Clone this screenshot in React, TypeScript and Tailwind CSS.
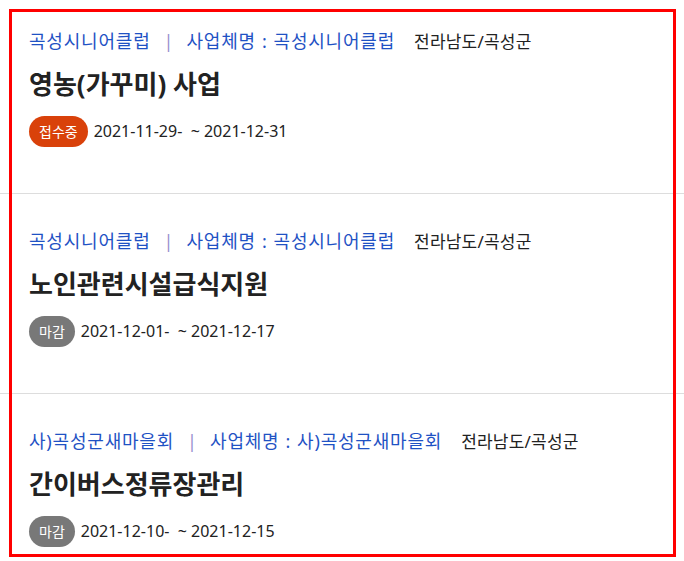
import React from 'react';

type Item = {
  org: string;
  name: string;
  region: string;
  title: string;
  status: 'open' | 'closed';
  period: string;
};

const items: Item[] = [
  {
    org: '곡성시니어클럽',
    name: '곡성시니어클럽',
    region: '전라남도/곡성군',
    title: '영농(가꾸미) 사업',
    status: 'open',
    period: '2021-11-29-  ~ 2021-12-31',
  },
  {
    org: '곡성시니어클럽',
    name: '곡성시니어클럽',
    region: '전라남도/곡성군',
    title: '노인관련시설급식지원',
    status: 'closed',
    period: '2021-12-01-  ~ 2021-12-17',
  },
  {
    org: '사)곡성군새마을회',
    name: '사)곡성군새마을회',
    region: '전라남도/곡성군',
    title: '간이버스정류장관리',
    status: 'closed',
    period: '2021-12-10-  ~ 2021-12-15',
  },
];

const ListItem: React.FC<{ item: Item }> = ({ item }) => (
  <li className="h-[200px] border-b border-[#dddddd] pl-[29px] pt-[33px]">
    <div className="flex items-baseline h-[28px] leading-[28px] whitespace-nowrap">
      <span className="text-[18px] tracking-[0.8px] text-[#1f52c4]">{item.org}</span>
      <span className="text-[18px] text-[#9a8fd0] mx-[13px]">|</span>
      <span className="text-[18px] tracking-[0.8px] text-[#1f52c4]">
        사업체명<span className="mx-[6px]">:</span>{item.name}
      </span>
      <span className="text-[17px] tracking-[0.2px] text-[#222222] ml-[19px]">{item.region}</span>
    </div>
    <h3 className="mt-[12px] h-[34px] leading-[34px] text-[26px] font-bold text-[#222222] whitespace-nowrap">
      {item.title}
    </h3>
    <div className="mt-[14px] flex items-center gap-[6px] h-[32px]">
      <span
        className={`h-[31px] px-[10px] rounded-full flex items-center text-[14px] text-white ${
          item.status === 'open' ? 'bg-[#d9410a]' : 'bg-[#787878]'
        }`}
      >
        {item.status === 'open' ? '접수중' : '마감'}
      </span>
      <span className="text-[16px] text-[#222222] whitespace-pre">{item.period}</span>
    </div>
  </li>
);

export default function App() {
  return (
    <div className="relative w-[684px] h-[561px] overflow-hidden bg-white font-['Noto_Sans','Noto_Sans_CJK_KR',sans-serif]">
      <ul className="-mt-[6px]">
        {items.map((item, i) => (
          <ListItem key={i} item={item} />
        ))}
      </ul>
      {/* highlight frame */}
      <div className="absolute left-[9px] top-[9px] w-[667px] h-[548px] border-[3px] border-[#ff0000] pointer-events-none" />
    </div>
  );
}
